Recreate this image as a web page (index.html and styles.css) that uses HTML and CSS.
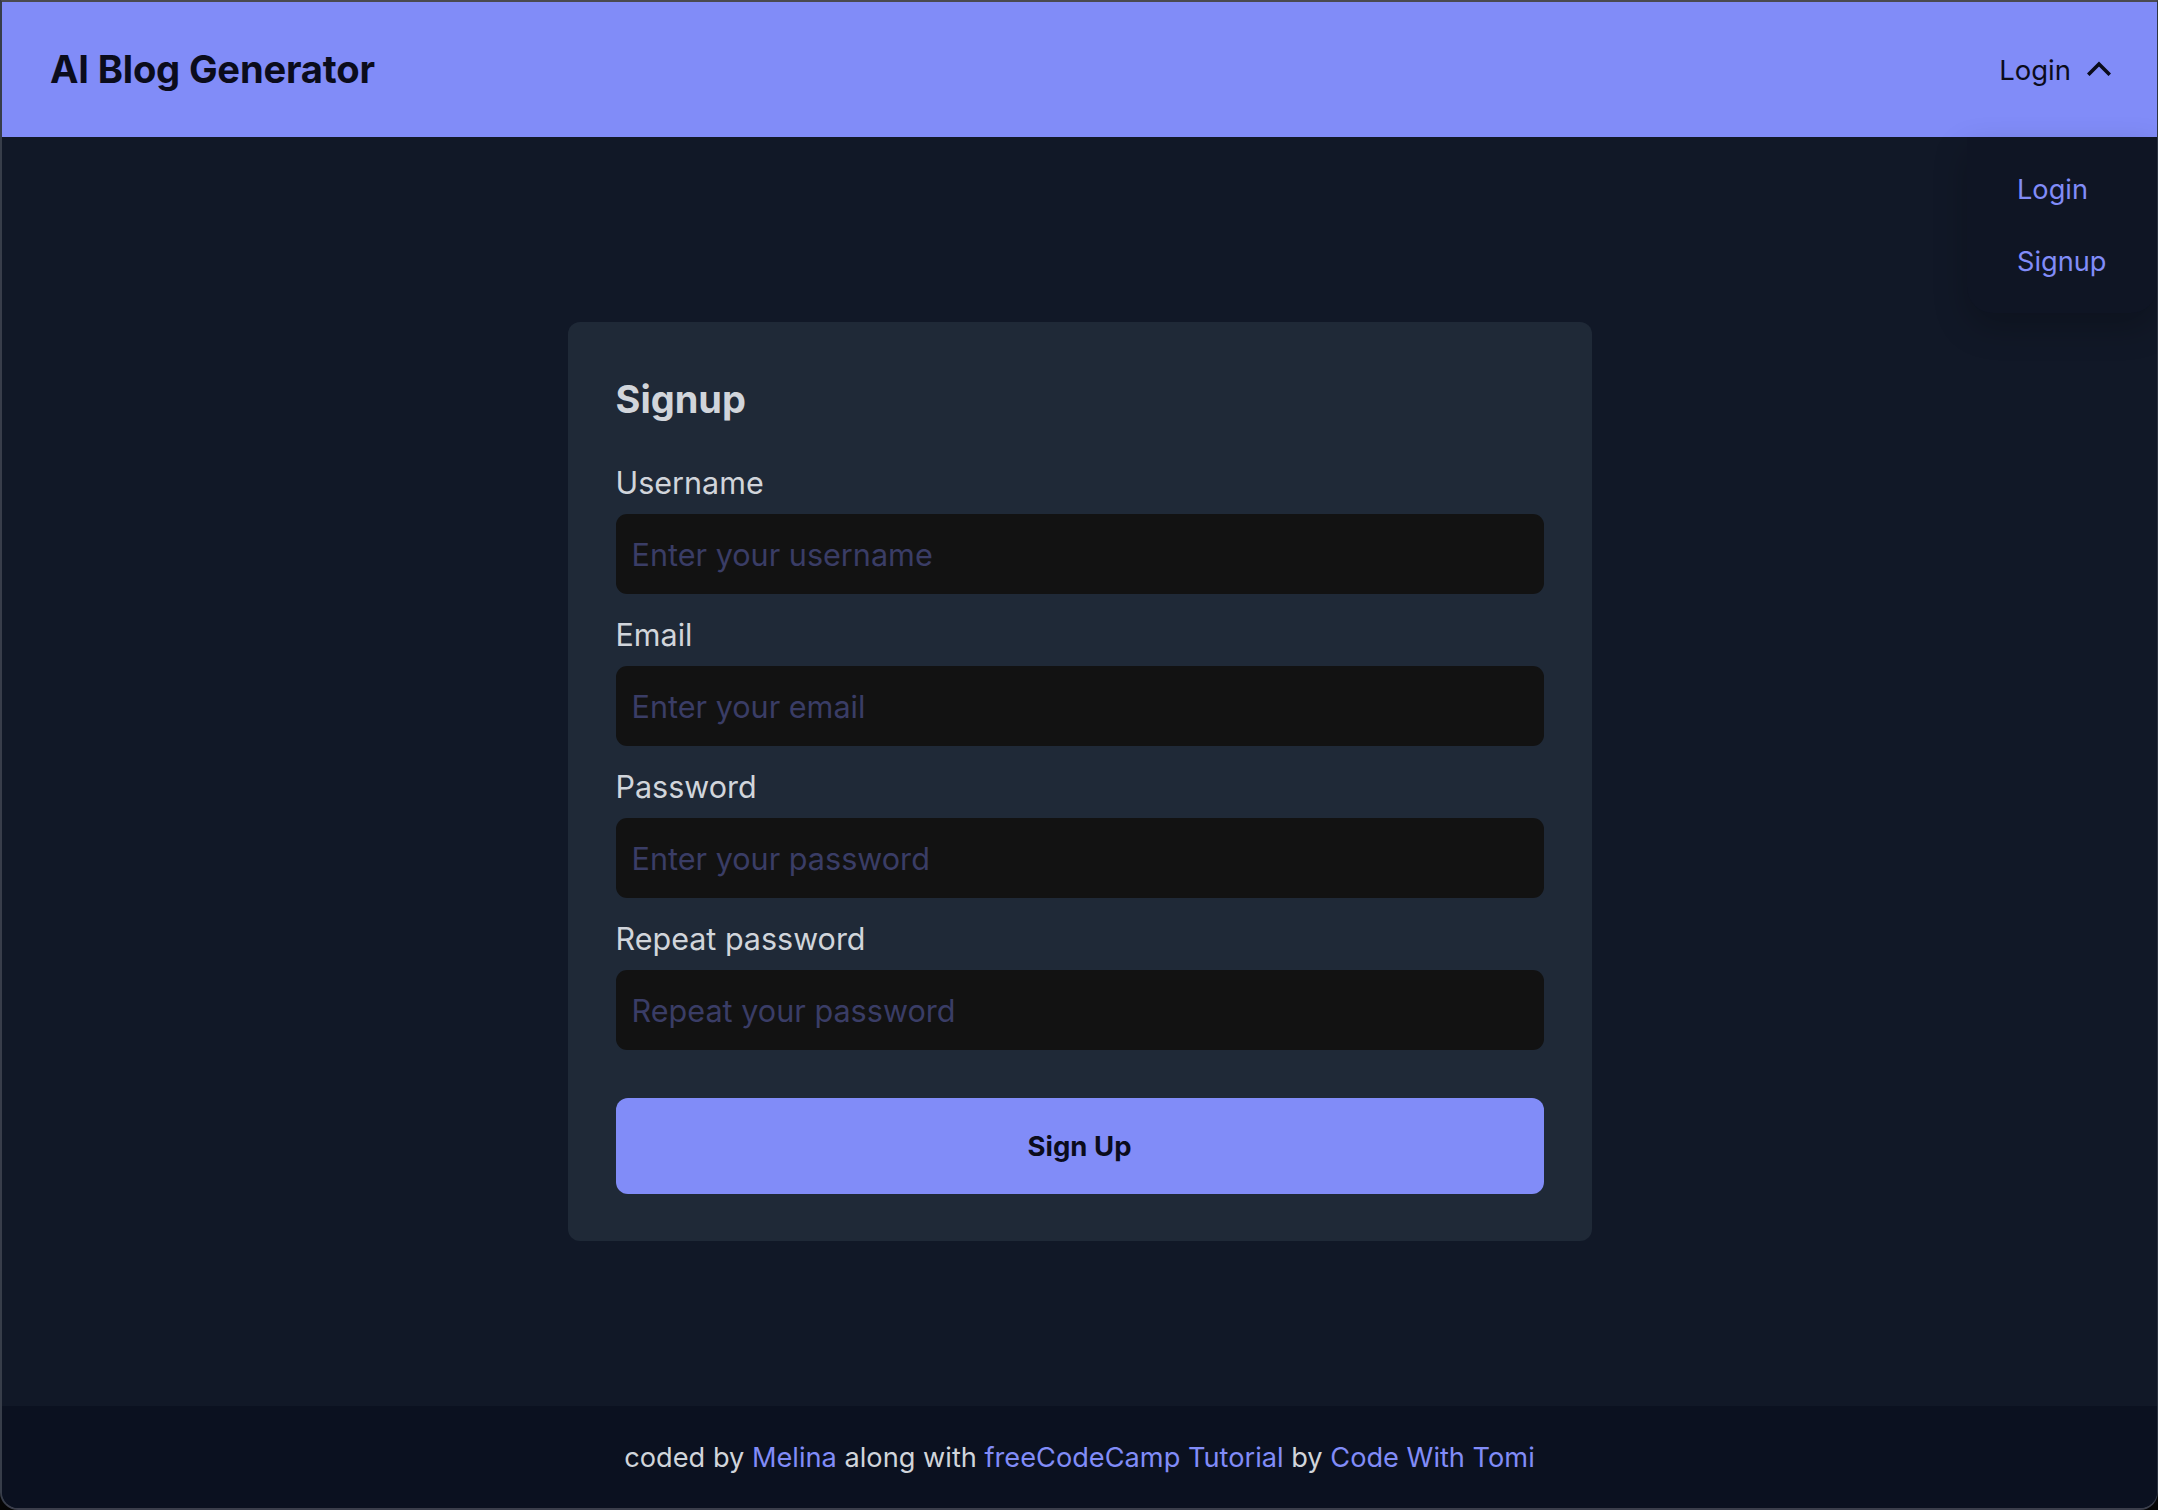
FILE: index.html
```html
<!DOCTYPE html>
<html lang="en">
<head>
<meta charset="utf-8">
<title>AI Blog Generator</title>
<link rel="stylesheet" href="styles.css">
</head>
<body>
<div class="window">
  <header class="topbar">
    <h1 class="brand">AI Blog Generator</h1>
    <div class="menu">
      <button class="menu-toggle" type="button">
        <span>Login</span>
        <svg class="chevron" width="24" height="15" viewBox="0 0 24 15" aria-hidden="true">
          <path d="M2.5 12.5 L12 3 L21.5 12.5" fill="none" stroke="#0b0c1c" stroke-width="3.6" stroke-linecap="square" stroke-linejoin="miter"/>
        </svg>
      </button>
      <ul class="dropdown">
        <li><a href="#">Login</a></li>
        <li><a href="#">Signup</a></li>
      </ul>
    </div>
  </header>

  <main class="main">
    <form class="card">
      <h2 class="card-title">Signup</h2>
      <div class="field">
        <label for="username">Username</label>
        <input id="username" type="text" placeholder="Enter your username">
      </div>
      <div class="field">
        <label for="email">Email</label>
        <input id="email" type="email" placeholder="Enter your email">
      </div>
      <div class="field">
        <label for="password">Password</label>
        <input id="password" type="password" placeholder="Enter your password">
      </div>
      <div class="field">
        <label for="repeat">Repeat password</label>
        <input id="repeat" type="password" placeholder="Repeat your password">
      </div>
      <button class="submit" type="button">Sign Up</button>
    </form>
  </main>

  <footer class="footer">
    <p>coded by <a href="#">Melina</a> along with <a href="#">freeCodeCamp Tutorial</a> by <a href="#">Code With Tomi</a></p>
  </footer>
</div>
</body>
</html>
```

FILE: styles.css
```css
* { box-sizing: border-box; }

html, body {
  margin: 0;
  padding: 0;
  background: #050505;
}

body {
  font-family: Inter, "Noto Sans", sans-serif;
  width: 2158px;
  height: 1510px;
  overflow: hidden;
}

.window {
  width: 2158px;
  height: 1510px;
  display: flex;
  flex-direction: column;
  background: #111827;
  border-top: 2px solid #4a4a50;
  border-left: 2px solid rgba(255, 255, 255, 0.16);
  border-right: 1px solid rgba(255, 255, 255, 0.12);
  border-bottom: 2px solid #3b3e4b;
  border-radius: 0 0 18px 18px;
  overflow: hidden;
}

/* Header */
.topbar {
  position: relative;
  height: 135px;
  flex: none;
  background: #818cf8;
  display: flex;
  align-items: center;
  justify-content: space-between;
  padding: 0 46px 0 48px;
}

.brand {
  margin: 0;
  font-size: 38.2px;
  font-weight: 700;
  color: #0b0c1c;
  letter-spacing: -0.2px;
  line-height: 1.2;
}

.menu-toggle {
  display: flex;
  align-items: center;
  gap: 16px;
  background: none;
  border: 0;
  padding: 0;
  font-family: inherit;
  font-size: 27.5px;
  color: #0b0c1c;
  cursor: pointer;
}

.chevron { display: block; margin-top: -2px; }

.dropdown {
  position: absolute;
  top: 100%;
  right: 0;
  width: 190px;
  margin: 0;
  padding: 17px 0 15px 50px;
  list-style: none;
  background: #0f1524;
  border-radius: 0 0 26px 26px;
  box-shadow: 0 14px 34px rgba(0, 0, 0, 0.22);
  z-index: 5;
}

.dropdown li a {
  display: block;
  padding: 17px 0;
  line-height: 38px;
  font-size: 27.2px;
  color: #818cf8;
  text-decoration: none;
}

/* Main */
.main {
  flex: 1;
  display: flex;
  justify-content: center;
  align-items: flex-start;
  padding-top: 185px;
}

.card {
  width: 1024px;
  background: #1f2937;
  border-radius: 12px;
  padding: 45px 48px 47px 48px;
}

.card-title {
  margin: 0 0 33px;
  font-size: 38px;
  line-height: 64px;
  font-weight: 700;
  color: #d1d5db;
}

.field { margin-bottom: 22px; }

.field label {
  display: block;
  font-size: 30.5px;
  line-height: 38px;
  margin-bottom: 12px;
  color: #d1d5db;
}

.field input {
  display: block;
  width: 100%;
  height: 80px;
  border: 0;
  outline: none;
  border-radius: 11px;
  background: #121212;
  padding: 0 16px;
  font-family: inherit;
  font-size: 30.6px;
  color: #d1d5db;
}

.field input::placeholder { color: #3a3d66; }

.submit {
  display: block;
  width: 100%;
  height: 96px;
  margin-top: 48px;
  border: 0;
  border-radius: 12px;
  background: #818cf8;
  color: #0b0c1c;
  font-family: inherit;
  font-size: 27.5px;
  font-weight: 700;
  cursor: pointer;
}

/* Footer */
.footer {
  height: 102px;
  flex: none;
  background: #0b1120;
  display: flex;
  align-items: center;
  justify-content: center;
}

.footer p {
  margin: 0;
  font-size: 27.2px;
  color: #d1d5db;
}

.footer a {
  color: #818cf8;
  text-decoration: none;
}
```
